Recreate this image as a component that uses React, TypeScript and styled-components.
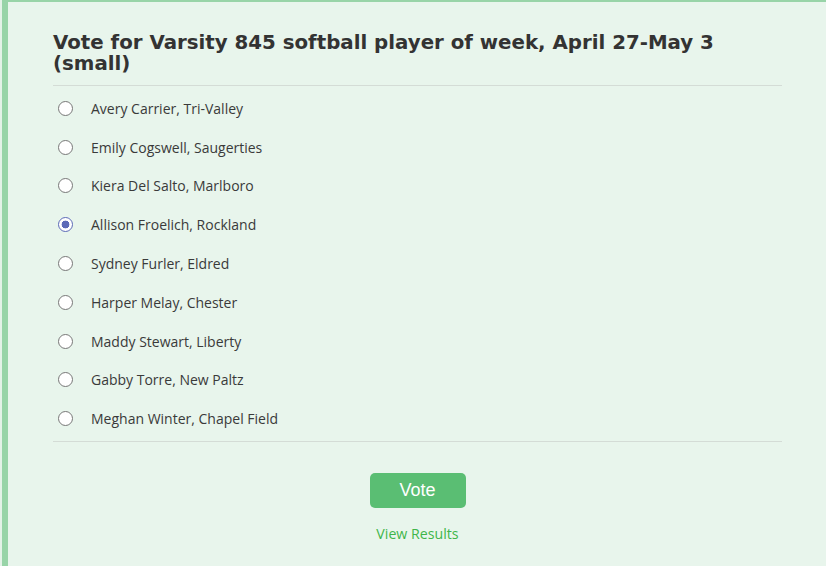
import React, { useState } from "react";
import styled, { createGlobalStyle } from "styled-components";

const Global = createGlobalStyle`
  html, body { margin: 0; padding: 0; background: #e8f5ec; }
  body { font-family: "Open Sans", "Noto Sans", sans-serif; }
`;

const Page = styled.div`
  width: 826px;
  height: 566px;
  box-sizing: border-box;
  padding-left: 2px;
  background: #e4f2e8;
`;

const Card = styled.div`
  height: 100%;
  box-sizing: border-box;
  background: #e8f5ec;
  border-left: 6px solid #98d4a8;
  border-top: 2px solid #98d4a8;
  padding: 30px 44px 0 45px;
  display: flex;
  flex-direction: column;
`;

const Title = styled.h2`
  margin: 0;
  font-family: "DejaVu Sans", Verdana, sans-serif;
  font-weight: bold;
  font-size: 19.8px;
  line-height: 21px;
  color: #333333;
  padding-bottom: 11px;
  border-bottom: 1px solid #d4dcd6;
`;

const List = styled.div`
  display: flex;
  flex-direction: column;
  padding: 3px 0 3px;
  border-bottom: 1px solid #d4dcd6;
`;

const Row = styled.label`
  display: flex;
  align-items: center;
  height: 38.8px;
  cursor: pointer;
`;

const Radio = styled.input`
  appearance: none;
  margin: 0 18px 0 5px;
  width: 15px;
  height: 15px;
  border-radius: 50%;
  border: 1px solid #777777;
  background: #ffffff;
  box-sizing: border-box;
  &:checked {
    border-color: #5d6ab8;
    background: radial-gradient(circle, #5d6ab8 0 3.6px, #ffffff 4.2px);
  }
`;

const Name = styled.span`
  font-size: 14px;
  color: #3a3a3a;
`;

const Actions = styled.div`
  display: flex;
  flex-direction: column;
  align-items: center;
  padding-top: 31px;
`;

const VoteButton = styled.button`
  width: 96px;
  height: 35px;
  border: none;
  border-radius: 5px;
  background: #5abe73;
  color: #ffffff;
  font-family: "Liberation Sans", Arial, sans-serif;
  font-size: 18px;
  cursor: pointer;
`;

const ResultsLink = styled.a`
  margin-top: 16px;
  font-size: 14.2px;
  color: #3fb54a;
  text-decoration: none;
`;

const players = [
  "Avery Carrier, Tri-Valley",
  "Emily Cogswell, Saugerties",
  "Kiera Del Salto, Marlboro",
  "Allison Froelich, Rockland",
  "Sydney Furler, Eldred",
  "Harper Melay, Chester",
  "Maddy Stewart, Liberty",
  "Gabby Torre, New Paltz",
  "Meghan Winter, Chapel Field",
];

export default function App() {
  const [sel, setSel] = useState(3);
  return (
    <>
      <Global />
      <Page>
        <Card>
          <Title>Vote for Varsity 845 softball player of week, April 27-May 3 (small)</Title>
          <List>
            {players.map((p, i) => (
              <Row key={p}>
                <Radio type="radio" name="poll" checked={sel === i} onChange={() => setSel(i)} />
                <Name>{p}</Name>
              </Row>
            ))}
          </List>
          <Actions>
            <VoteButton>Vote</VoteButton>
            <ResultsLink href="#">View Results</ResultsLink>
          </Actions>
        </Card>
      </Page>
    </>
  );
}
